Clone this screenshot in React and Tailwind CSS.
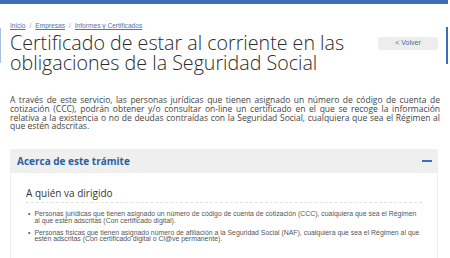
import React from "react";

export default function App() {
  return (
    <div className="relative w-[450px] h-[258px] overflow-hidden bg-white" style={{ fontFamily: '"Open Sans", sans-serif' }}>
      <div className="h-[4px] w-[448px] bg-[#3a6fb5]" />
      <div className="absolute left-0 top-[28px] h-[35px] w-[1px] bg-[#a9c0de]" />
      <div className="absolute left-[446px] top-[27px] h-[37px] w-[2px] bg-[#3b6fb6]" />
      <div className="px-[10px]">
        <div className="mt-[17px] flex items-center gap-[4px] text-[6.6px] leading-[9px] text-[#999] font-['Liberation_Sans',sans-serif]">
          <span className="text-[#4a76b0] underline">Inicio</span>
          <span>/</span>
          <span className="text-[#4a76b0] underline">Empresas</span>
          <span>/</span>
          <span className="text-[#4a76b0] underline">Informes y Certificados</span>
        </div>
        <div className="mt-[3px] flex items-start justify-between">
          <h1 className="flex flex-col text-[19.65px] leading-[20px] font-light text-[#2b2b2b]">
            <span>Certificado de estar al corriente en las</span>
            <span>obligaciones de la Seguridad Social</span>
          </h1>
          <div className="mt-[4px] mr-[2px] flex h-[13px] w-[60px] items-center justify-center rounded-[3px] bg-[#ededed] text-[7px] text-[#4a6a9a] font-['Liberation_Sans',sans-serif]">
            &lt; Volver
          </div>
        </div>
        <p className="mt-[23px] text-justify text-[8.5px] leading-[8.8px] text-[#444]">
          A través de este servicio, las personas jurídicas que tienen asignado un número de código de cuenta de cotización (CCC), podrán obtener y/o consultar on-line un certificado en el que se recoge la información relativa a la existencia o no de deudas contraídas con la Seguridad Social, cualquiera que sea el Régimen al que estén adscritas.
        </p>
        <div className="mt-[18px] mr-[2px]">
          <div className="flex h-[24px] items-center justify-between bg-[#efefef] pl-[7px] pr-[6px]">
            <span className="text-[10px] font-bold text-[#2d5f9f]">Acerca de este trámite</span>
            <span className="h-[2px] w-[10px] bg-[#3b6fb6]" />
          </div>
          <div className="h-[100px] border border-t-0 border-[#ececec] px-[15px] pt-[14px]">
            <div className="text-[10px] leading-[13px] text-[#333]">A quién va dirigido</div>
            <div className="mt-[2px] border-t border-dashed border-[#e2e2e2]" />
            <ul className="mt-[8px] text-[6.9px] leading-[6.5px] text-[#555] font-['Liberation_Sans',sans-serif]">
              <li className="flex gap-[4px] pl-[2px]">
                <span>•</span>
                <span>Personas jurídicas que tienen asignado un número de código de cuenta de cotización (CCC), cualquiera que sea el Régimen al que estén adscritas (Con certificado digital).</span>
              </li>
              <li className="mt-[5.5px] flex gap-[4px] pl-[2px]">
                <span>•</span>
                <span>Personas físicas que tienen asignado número de afiliación a la Seguridad Social (NAF), cualquiera que sea el Régimen al que estén adscritas (Con certificado digital o Cl@ve permanente).</span>
              </li>
            </ul>
          </div>
        </div>
      </div>
    </div>
  );
}
